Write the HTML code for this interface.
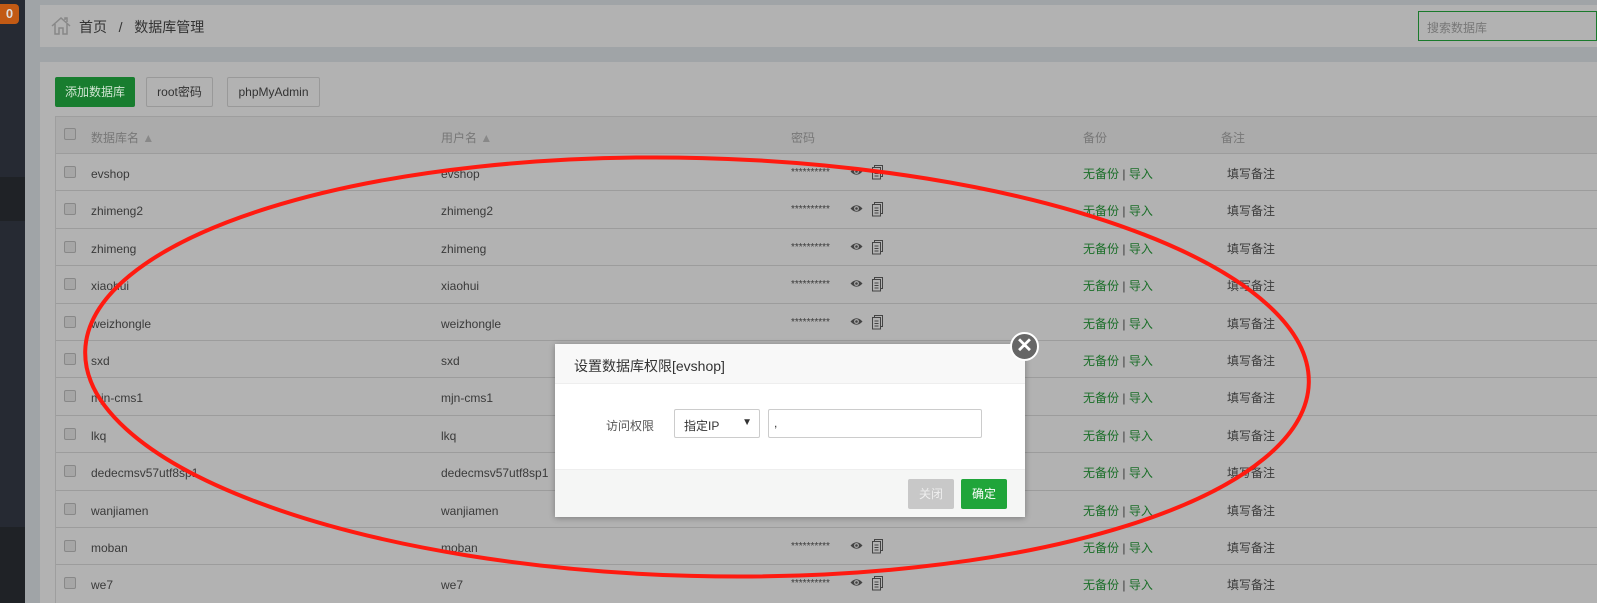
<!DOCTYPE html>
<html><head><meta charset="utf-8"><style>
*{margin:0;padding:0;box-sizing:border-box}
body{width:1597px;height:603px;overflow:hidden;background:#a0a4a7;font-family:"Liberation Sans","Noto Sans CJK SC",sans-serif;font-size:12px;color:#3a3a3a;position:relative}
.side{position:absolute;left:0;top:0;width:25px;height:603px;background:#262a33}
.badge{position:absolute;left:0;top:4px;width:19px;height:20px;background:#c25a14;border-radius:0 4px 4px 0;color:#ddd;font-weight:bold;font-size:13px;text-align:center;line-height:20px}
.top{position:absolute;left:40px;top:5px;width:1557px;height:42px;background:#b2b2b2}
.panel{position:absolute;left:40px;top:62px;width:1557px;height:541px;background:#b2b2b2}
.btn{position:absolute;top:77px;height:30px;border:1px solid #999;border-radius:2px;line-height:28px;font-size:12px;padding:0;text-align:center;white-space:nowrap;color:#333}
.tbl{position:absolute;left:55px;top:116px;width:1542px;height:487px;border:1px solid #9e9e9e;border-right:none;border-bottom:none;background:#b2b2b2}
.row{position:absolute;left:0;width:1542px;height:37.4px;border-top:1px solid #9c9c9c}
.row span{position:absolute;top:13px;font-size:12px}
.cb{position:absolute;left:8px;top:12px;width:12px;height:12px;border:1px solid #888;border-radius:2px;background:#a6a6a6}
.g{color:#1a6e28}
</style></head><body>
<div class="side"><div class="badge">0</div>
<div style="position:absolute;top:177px;left:0;width:25px;height:44px;background:#1f2226"></div>
<div style="position:absolute;top:527px;left:0;width:25px;height:76px;background:#1f2226"></div></div>
<div class="top">
<svg style="position:absolute;left:11px;top:11px" width="20" height="20" viewBox="0 0 20 20" fill="none" stroke="#888" stroke-width="1.5"><path d="M1 10L10 2L19 10M4 8V18H8V12H12V18H16V8M14 4V2H16V6"/></svg>
<span style="position:absolute;left:39px;top:12px;font-size:14px;color:#333">首页 &nbsp; / &nbsp; 数据库管理</span>
<div style="position:absolute;left:1378px;top:6px;width:179px;height:30px;border:1px solid #1a7a2c;color:#777;font-size:12px;padding:7px 8px">搜索数据库</div>
</div>
<div class="panel"></div>
<div class="btn" style="left:55px;width:80px;background:#187d2f;border-color:#187d2f;color:#cfe5d2">添加数据库</div>
<div class="btn" style="left:146px;width:67px">root密码</div>
<div class="btn" style="left:227px;width:93px">phpMyAdmin</div>
<div class="tbl">
<div style="position:absolute;left:0;top:0;width:1542px;height:36px;background:#ababab;color:#777;font-size:12px">
<div class="cb" style="top:11px"></div>
<span style="position:absolute;left:35px;top:12px">数据库名 <span style="color:#888">▲</span></span>
<span style="position:absolute;left:385px;top:12px">用户名 <span style="color:#888">▲</span></span>
<span style="position:absolute;left:735px;top:12px">密码</span>
<span style="position:absolute;left:1027px;top:12px">备份</span>
<span style="position:absolute;left:1165px;top:12px">备注</span>
</div>
<div id="rows"></div>
</div>
<script>
var n=["evshop","zhimeng2","zhimeng","xiaohui","weizhongle","sxd","mjn-cms1","lkq","dedecmsv57utf8sp1","wanjiamen","moban","we7"],h="";
n.forEach(function(x,i){h+='<div class="row" style="top:'+(36+i*37.4)+'px"><div class="cb"></div><span style="left:35px">'+x+'</span><span style="left:385px">'+x+'</span><span style="left:735px;top:13px;font-size:10px">**********</span><svg style="position:absolute;left:794px;top:13px" width="13" height="9"><path d="M0.5 4.5Q6.5 -2 12.5 4.5Q6.5 11 0.5 4.5Z" fill="#444"/><circle cx="6.5" cy="4.5" r="2.4" fill="#b2b2b2"/><circle cx="6.5" cy="4.5" r="1.3" fill="#444"/></svg><svg style="position:absolute;left:816px;top:11px" width="11" height="15"><rect x="2.5" y="0.5" width="8" height="11" fill="none" stroke="#444"/><rect x="0.5" y="2.5" width="8" height="11.5" fill="#b2b2b2" stroke="#444"/><path d="M2.5 6h4M2.5 8.5h4M2.5 11h4" stroke="#444"/></svg><span style="left:1027px;top:11px"><b class="g" style="font-weight:normal">无备份</b> | <b class="g" style="font-weight:normal">导入</b></span><span style="left:1171px;top:11px">填写备注</span></div>'});
document.getElementById("rows").innerHTML=h;
</script>
<svg style="position:absolute;left:0;top:0" width="1597" height="603"><ellipse cx="697" cy="367" rx="612" ry="209" fill="none" stroke="#ff1a10" stroke-width="4" transform="rotate(1.5 697 367)"/></svg>
<div style="position:absolute;left:555px;top:344px;width:470px;height:173px;background:#fff;box-shadow:0 1px 6px rgba(0,0,0,.3)">
<div style="height:40px;background:#f8f8f8;border-bottom:1px solid #eee;padding:12px 0 0 19px;font-size:14px;color:#333">设置数据库权限[evshop]</div>
<span style="position:absolute;left:51px;top:73px;font-size:12px;color:#555">访问权限</span>
<div style="position:absolute;left:119px;top:65px;width:86px;height:29px;border:1px solid #ccc;border-radius:2px;font-size:12px;padding:7px 9px;color:#333">指定IP<span style="position:absolute;right:7px;top:7px;font-size:10px">▼</span></div>
<div style="position:absolute;left:213px;top:65px;width:214px;height:29px;border:1px solid #ccc;border-radius:2px;padding:6px 5px;color:#333">,</div>
<div style="position:absolute;left:0;top:125px;width:470px;height:48px;background:#f5f6f5;border-top:1px solid #eee">
<div style="position:absolute;left:353px;top:9px;width:46px;height:30px;background:#c8c8c8;color:#eee;border-radius:2px;text-align:center;line-height:30px">关闭</div>
<div style="position:absolute;left:406px;top:9px;width:46px;height:30px;background:#20a53a;color:#fff;border-radius:2px;text-align:center;line-height:30px">确定</div>
</div></div>
<div style="position:absolute;left:1010px;top:332px;width:29px;height:29px;border-radius:50%;background:#666;border:2px solid #fff;color:#fff;text-align:center;line-height:24px;font-size:20px;font-weight:bold">✕</div>
</body></html>
